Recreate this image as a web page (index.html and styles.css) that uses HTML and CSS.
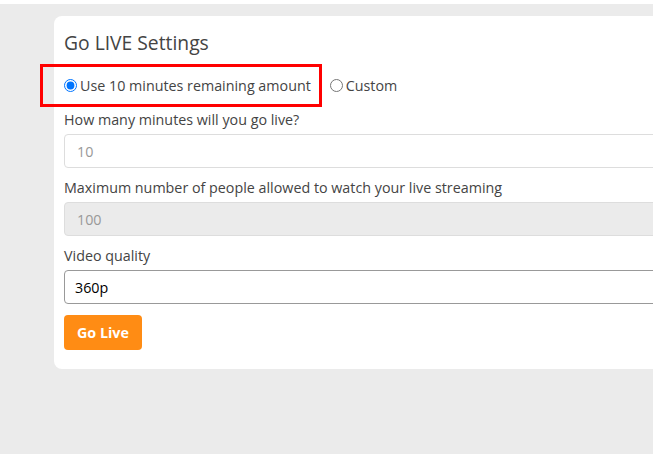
FILE: index.html
```html
<!DOCTYPE html>
<html>
<head>
	<meta charset="utf8">
	<title>Go LIVE Settings</title>
	<link rel="stylesheet" href="styles.css">
</head>
<body>
	<div id="pagina">
		<div class="card">
			<h2>Go LIVE Settings</h2>
			<div class="opcoes">
				<label class="opcao destaque"><input type="radio" name="modo" checked> Use 10 minutes remaining amount</label>
				<label class="opcao"><input type="radio" name="modo"> Custom</label>
			</div>
			<div class="grupo">
				<label for="minutos">How many minutes will you go live?</label>
				<input type="text" id="minutos" class="campo" value="10" readonly>
			</div>
			<div class="grupo">
				<label for="pessoas">Maximum number of people allowed to watch your live streaming</label>
				<input type="text" id="pessoas" class="campo" value="100" disabled>
			</div>
			<div class="grupo">
				<label for="qualidade">Video quality</label>
				<select id="qualidade" class="campo escolha">
					<option>360p</option>
					<option>480p</option>
					<option>720p</option>
				</select>
			</div>
			<button class="botao">Go Live</button>
		</div>
	</div>
</body>
</html>
```

FILE: styles.css
```css
html, body{
	margin: 0;
	height: 100%;
	overflow: hidden;
}
body{
	background-color: #ebebeb;
	border-top: 4px solid #fff;
	font-family: "Open Sans", Arial, sans-serif;
	color: #444;
}
#pagina{
	padding-top: 12px;
	padding-left: 54px;
	width: 599px;
	overflow: hidden;
}
.card{
	width: 700px;
	background-color: #fff;
	border-radius: 8px 0 0 8px;
	padding: 13px 10px 19px 10px;
}
h2{
	font-size: 19.3px;
	font-weight: normal;
	margin: 0 0 12px 0;
	color: #444;
}
.opcoes{
	display: flex;
	align-items: center;
	gap: 19px;
	font-size: 14.3px;
	margin-bottom: 7px;
}
.opcao{
	display: flex;
	align-items: center;
	gap: 3px;
	padding: 8px 0;
}
.opcao input{
	margin: 0;
}
.destaque{
	position: relative;
}
.destaque::after{
	content: "";
	position: absolute;
	left: -24px;
	right: -11px;
	top: -4px;
	bottom: -4px;
	border: 3px solid #f00;
}
.grupo{
	margin-bottom: 10px;
}
.grupo label{
	display: block;
	font-size: 14.3px;
	margin-bottom: 5px;
}
.campo{
	display: block;
	box-sizing: border-box;
	width: 100%;
	height: 34px;
	padding: 0 12px;
	font-family: "Open Sans", Arial, sans-serif;
	font-size: 14.3px;
	color: #999;
	border: 1px solid #ddd;
	border-radius: 4px;
	background-color: #fff;
	outline: none;
}
.campo:disabled{
	background-color: #ebebeb;
}
.escolha{
	color: #000;
	border-color: #999;
	padding-left: 10px;
	appearance: none;
}
.botao{
	margin-top: 1px;
	background-color: #ff8c14;
	color: #fff;
	font-family: "Open Sans", Arial, sans-serif;
	font-weight: bold;
	font-size: 14.3px;
	border: none;
	border-radius: 4px;
	padding: 0 13px;
	height: 35px;
}
```
